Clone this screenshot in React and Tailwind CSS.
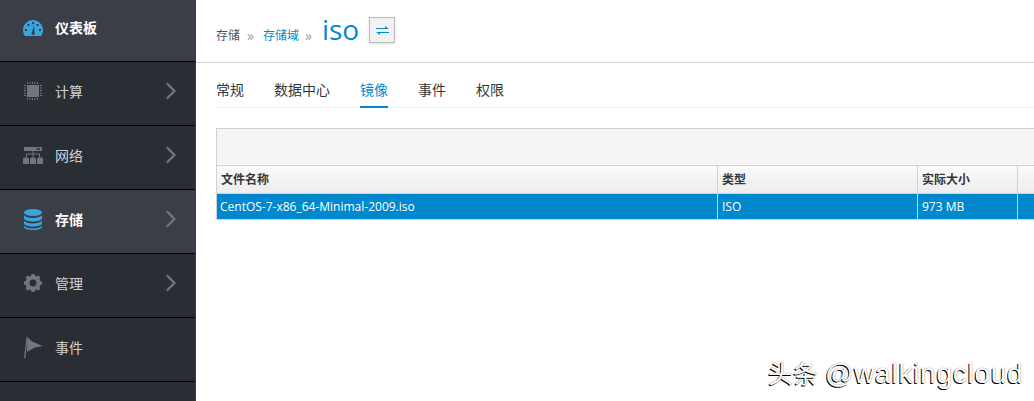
import React from 'react';
import { ChevronRight } from 'lucide-react';

// Ícones desenhados à mão, no estilo do menu lateral
const IconDashboard = () => (
    <svg width="20" height="16" viewBox="0 0 20 16">
        <path fill="currentColor" fillRule="evenodd" d="M10 0C4.500 0 0 4.500 0 10c0 2 .5 3.700 1.400 5.200.3.5.8.8 1.300.8h14.600c.5 0 1-.3 1.300-.8.9-1.500 1.400-3.200 1.400-5.200C20 4.500 15.500 0 10 0Z" />
        <path fill="#3a3e46" d="M9 2h2v2H9zM4.500 4h2v2h-2zM13.500 4h2v2h-2zM2 9h2v2H2zM16 9h2v2h-2zM8.800 12.800 11 5.500l.6 7.500a1.500 1.500 0 1 1-2.800-.2Z" />
    </svg>
);

const IconCpu = () => (
    <svg width="20" height="20" viewBox="0 0 20 20" fill="currentColor">
        <rect x="4" y="4" width="12" height="12" />
        <path d="M4 1h1v2H4zM6.500 1h1v2h-1zM9 1h1v2H9zM11.500 1h1v2h-1zM14 1h1v2h-1zM4 17h1v2H4zM6.500 17h1v2h-1zM9 17h1v2H9zM11.500 17h1v2h-1zM14 17h1v2h-1zM1 4h2v1H1zM1 6.500h2v1H1zM1 9h2v1H1zM1 11.500h2v1H1zM1 14h2v1H1zM17 4h2v1h-2zM17 6.500h2v1h-2zM17 9h2v1h-2zM17 11.500h2v1h-2zM17 14h2v1h-2z" />
    </svg>
);

const IconNetwork = () => (
    <svg width="20" height="17" viewBox="0 0 20 17" fill="currentColor">
        <path fillRule="evenodd" d="M1 0h18v4H1zM13.500 1.200v1.500h3.500V1.200z" />
        <path d="M9.500 4h1v2.500H17V10h-1V7.500h-5.500V10h-1V7.500H4V10H3V6.500h6.500z" />
        <path d="M0 17v-5c0-.8 1-1.800 3-1.800s3 1 3 1.800v5ZM7 17v-5c0-.8 1-1.800 3-1.800s3 1 3 1.800v5ZM14 17v-5c0-.8 1-1.800 3-1.800s3 1 3 1.800v5Z" />
    </svg>
);

const IconDatabase = () => (
    <svg width="18" height="21" viewBox="0 0 18 21" fill="currentColor">
        <ellipse cx="9" cy="3.500" rx="9" ry="3.500" />
        <path d="M0 6c1 2 5 3 9 3s8-1 9-3v3c0 2-4 3.500-9 3.500S0 11 0 9ZM0 11.500c1 2 5 3 9 3s8-1 9-3V14c0 2-4 3.500-9 3.500S0 16 0 14ZM0 16.500c1 2 5 3 9 3s8-1 9-3V18c0 1.700-4 3-9 3s-9-1.300-9-3Z" />
    </svg>
);

const IconGear = () => (
    <svg width="18" height="18" viewBox="0 0 18 18">
        <circle cx="9" cy="9" r="5.500" fill="none" stroke="currentColor" strokeWidth="4" />
        <path fill="none" stroke="currentColor" strokeWidth="3.500" d="M9 0v3M9 15v3M0 9h3M15 9h3M2.600 2.600l2.100 2.100M13.300 13.300l2.100 2.100M2.600 15.400l2.100-2.100M13.300 4.700l2.100-2.100" />
    </svg>
);

const IconFlag = () => (
    <svg width="19" height="21" viewBox="0 0 19 21" fill="currentColor">
        <path d="M2.500 0 3.500.5 1.400 21H0Z" />
        <path d="M3.300 0 8 4.500 19 9l-8 1.500L3 15Z" />
    </svg>
);

const menu = [
    { label: '仪表板', icon: IconDashboard, active: true, first: true },
    { label: '计算', icon: IconCpu, arrow: true },
    { label: '网络', icon: IconNetwork, arrow: true },
    { label: '存储', icon: IconDatabase, arrow: true, active: true },
    { label: '管理', icon: IconGear, arrow: true },
    { label: '事件', icon: IconFlag },
];

const tabs = ['常规', '数据中心', '镜像', '事件', '权限'];

function MenuItem({ item }) {
    const Icon = item.icon;
    return (
        <div className={`flex items-center shrink-0 border-b border-black pl-[23px] pr-[10px] ${item.first ? 'h-[62px] pb-[6px]' : 'h-[64px] pb-[5px]'} ${item.active ? 'bg-[#3a3e46]' : 'bg-[#292d34]'}`}>
            <span className={`w-[20px] flex justify-center ${item.active ? 'text-[#39a5dc]' : 'text-[#72767b]'}`}>
                <Icon />
            </span>
            <span className={`ml-[12px] text-[14px] ${item.active ? 'font-bold text-white' : 'text-[#d1d1d1]'}`}>{item.label}</span>
            {item.arrow && <ChevronRight size={28} strokeWidth={2} className="ml-auto text-[#72767b]" />}
        </div>
    );
}

export default function App() {
    return (
        <div className="relative flex h-[401px] w-[1034px] overflow-hidden bg-white font-['Open_Sans','Noto_Sans_CJK_SC',sans-serif] text-[#363636]">
            {/* Menu lateral */}
            <aside className="flex w-[196px] shrink-0 flex-col bg-[#292d34] border-r border-[#3a3e46]">
                {menu.map((item) => (
                    <MenuItem key={item.label} item={item} />
                ))}
            </aside>

            <main className="flex min-w-0 flex-1 flex-col">
                {/* Cabeçalho */}
                <header className="flex h-[63px] shrink-0 items-center border-b border-[#d1d1d1] pb-[2px] pl-[20px]">
                    <span className="mt-[12px] text-[12px] text-[#4d5258]">存储</span>
                    <span className="mt-[12px] ml-[7px] mr-[9px] text-[14px] leading-none text-[#9c9c9c]">»</span>
                    <span className="mt-[12px] text-[12px] text-[#0088ce]">存储域</span>
                    <span className="mt-[12px] ml-[6px] mr-[10px] text-[14px] leading-none text-[#9c9c9c]">»</span>
                    <h1 className="mb-[3px] text-[28px] leading-none text-[#0088ce]">iso</h1>
                    <button className="ml-[10px] flex h-[26px] w-[26px] items-center justify-center border border-[#bbb] bg-[#f1f1f1] text-[#0088ce] shadow-sm">
                        <svg width="13" height="9" viewBox="0 0 13 9" fill="currentColor">
                            <path d="M0 2h9V0l4 3H0zM13 6H0l4 3V7h9z" />
                        </svg>
                    </button>
                </header>

                {/* Abas */}
                <nav className="ml-[20px] mt-[14px] flex h-[31px] shrink-0 gap-[30px] border-b border-[#ededed] text-[14px]">
                    {tabs.map((tab) => (
                        <span key={tab} className={`h-[31px] leading-[26px] ${tab === '镜像' ? 'border-b-2 border-[#0088ce] text-[#0088ce]' : ''}`}>{tab}</span>
                    ))}
                </nav>

                {/* Tabela */}
                <section className="ml-[20px] mt-[20px] border-y border-l border-[#d1d1d1] text-[12px]">
                    <div className="h-[37px] border-b border-[#d1d1d1] bg-[#f5f5f5]" />
                    <div className="flex h-[28px] border-b border-[#d1d1d1] bg-gradient-to-b from-[#fafafa] to-[#ededed] font-bold leading-[27px]">
                        <div className="w-[501px] shrink-0 border-r border-[#d1d1d1] pl-[4px]">文件名称</div>
                        <div className="w-[200px] shrink-0 border-r border-[#d1d1d1] pl-[4px]">类型</div>
                        <div className="w-[100px] shrink-0 border-r border-[#d1d1d1] pl-[4px]">实际大小</div>
                    </div>
                    <div className="flex h-[25px] bg-[#0088ce] leading-[25px] text-white">
                        <div className="w-[501px] shrink-0 border-r border-[#d1d1d1] pl-[3px]">CentOS-7-x86_64-Minimal-2009.iso</div>
                        <div className="w-[200px] shrink-0 border-r border-[#d1d1d1] pl-[4px]">ISO</div>
                        <div className="w-[100px] shrink-0 border-r border-[#d1d1d1] pl-[4px]">973 MB</div>
                    </div>
                </section>
            </main>

            {/* Marca d'água */}
            <div className="absolute left-[768px] top-[357px] whitespace-nowrap font-['Liberation_Sans','Noto_Sans_CJK_SC',sans-serif] text-[25px] leading-[34px] text-white [text-shadow:-1px_1px_0_#000,0_0_1px_#555]">
                头条 <span className="text-[28px] tracking-[0.75px]">@walkingcloud</span>
            </div>
        </div>
    );
}
